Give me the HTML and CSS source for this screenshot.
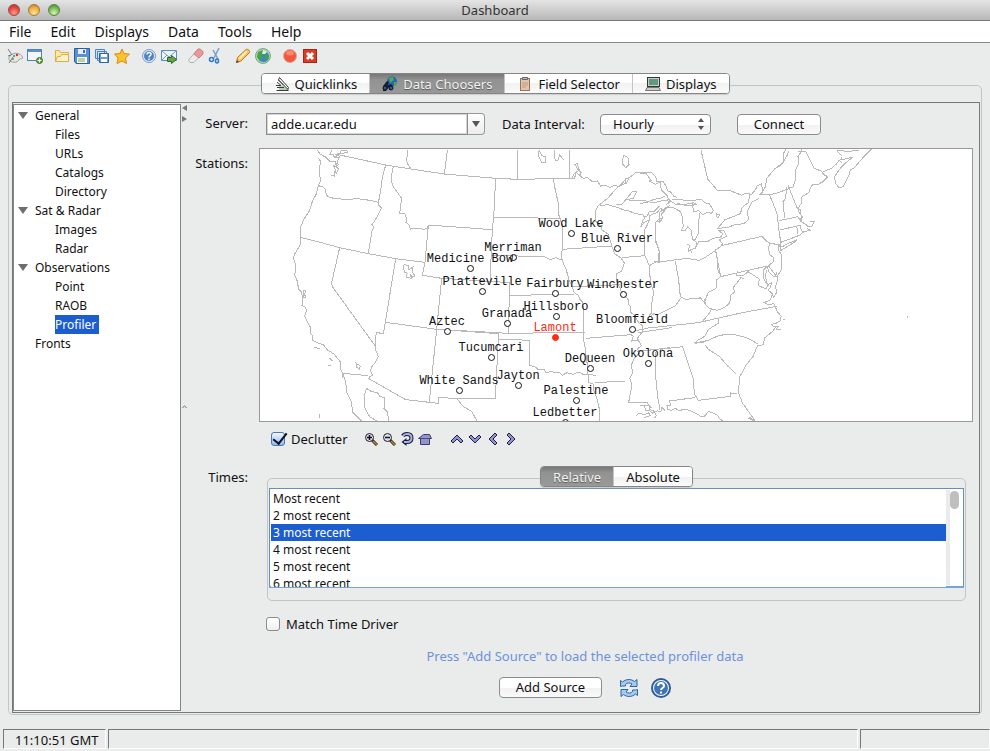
FILE: index.html
```html
<!DOCTYPE html>
<html lang="en">
<head>
<meta charset="utf-8">
<title>Dashboard</title>
<link rel="stylesheet" href="styles.css">
</head>
<body>
<header class="titlebar">
  <div class="lights"><span class="light red"></span><span class="light amber"></span><span class="light green"></span></div>
  <h1>Dashboard</h1>
</header>
<nav class="menubar">
  <button>File</button><button>Edit</button><button>Displays</button><button>Data</button><button>Tools</button><button>Help</button>
</nav>
<div class="toolbar" role="toolbar" aria-label="Main">
  <div class="tools">
    <button aria-label="Dashboard"><svg viewBox="0 0 16 16"><path d="M4 7c3-3 10-2 11.500 2 .5 3-2 1-3 2-1 2-3 4-7 3s-5-4-1.500-7z" fill="#e6e8e4" stroke="#9a9e98"/><path d="M1 1l4 6M4 7L1 8M2 15l4-6" fill="none" stroke="#777"/><circle cx="7" cy="8" r="1" fill="#4a75c4"/><circle cx="10" cy="7" r="1.200" fill="#d33"/><circle cx="6" cy="11" r="1" fill="#4a4"/></svg></button>
    <button aria-label="New window"><svg viewBox="0 0 16 16"><rect x=".5" y="1.500" width="14" height="11" fill="#f2f6fb" stroke="#5580b5"/><path d="M1 2h13v2H1z" fill="#5c8fd0"/><circle cx="12.500" cy="12.500" r="3" fill="#66a845" stroke="#39741f"/><path d="M10.500 12.500h4M12.500 10.500v4" stroke="#fff"/></svg></button>
  </div>
  <div class="tools">
    <button aria-label="Open"><svg viewBox="0 0 16 16"><path d="M1.500 13.500v-11h4l1 2h8v9z" fill="#fbe9a6" stroke="#e0ac48"/><path d="M3.500 8.500h3l1-2h7v7h-13z" fill="#fdf3c8" stroke="#e0ac48"/></svg></button>
    <button aria-label="Save"><svg viewBox="0 0 16 16"><path d="M.5.5h15v15H2l-1.500-2z" fill="#5b8fd3" stroke="#285e9e"/><path d="M4 1h8v5H4z" fill="#e7effa"/><path d="M9 2h2v3H9z" fill="#376fb2"/><path d="M3 9h10v6H3z" fill="#fff"/><path d="M4 11h7M4 13h7" stroke="#76a83f"/></svg></button>
    <button aria-label="Save as"><svg viewBox="0 0 16 16"><path d="M1.500 1.500h9v9h-9zM3.500 3.500h9v9h-9z" fill="#cfe0f4" stroke="#4e83c4"/><path d="M5.500 5.500h9v9h-9z" fill="#6c9cdb" stroke="#2c63a8"/><path d="M7 6h6v3H7zM7 11h6v3H7z" fill="#fff"/></svg></button>
    <button aria-label="Favorites"><svg viewBox="0 0 16 16"><path d="M8 1l2 4.500 5.500.5-4 4 1 5.500L8 13l-5 2.500L4 10 .5 6 6 5.500z" fill="#fbc22d" stroke="#d98d12"/></svg></button>
  </div>
  <div class="tools">
    <button aria-label="Help"><svg viewBox="0 0 16 16"><circle cx="8" cy="8" r="6.500" fill="#e4ecf6" stroke="#7d9cc6"/><circle cx="8" cy="8" r="5" fill="#4f83c6"/><path d="M6 6.500c0-3 4.500-2.500 4 0-.3 1.300-2 1.300-2 3M8 10.500v1.500" fill="none" stroke="#fff" stroke-width="1.500"/></svg></button>
    <button aria-label="Support request"><svg viewBox="0 0 16 16"><path d="M.5 2.500h15v10H.5z" fill="#edf4fc" stroke="#5e8cc3"/><path d="M1 3l7 6 7-6M1 12l5-5" fill="none" stroke="#6f9bd0"/><path d="M6.500 9.500h4v-2l5 4-5 4v-2h-4z" fill="#69a349" stroke="#2d6c20"/></svg></button>
  </div>
  <div class="tools">
    <button aria-label="Remove all"><svg viewBox="0 0 16 16"><path d="M.5 12l9-10.500 5.500 3.500-9 9.500H2z" fill="#ecebea" stroke="#b5b0b0"/><path d="M6 6l4-5h2l3 2.500V6l-4 4z" fill="#ee979b" stroke="#cf7f80"/></svg></button>
    <button aria-label="Remove displays"><svg viewBox="0 0 16 16"><path d="M11 0L6 10M5 2l5 9" fill="none" stroke="#7a9dca" stroke-width="1.500"/><ellipse cx="3.500" cy="11.500" rx="2" ry="2" fill="none" stroke="#2f76c4" stroke-width="1.500"/><ellipse cx="9" cy="13" rx="1.500" ry="2" fill="none" stroke="#2f76c4" stroke-width="1.500"/></svg></button>
  </div>
  <div class="tools">
    <button aria-label="Edit"><svg viewBox="0 0 16 16"><path d="M1.500 14.500l1-5 8.500-8c1-1 4.500 1 3.500 3L6 13z" fill="#fbc65c" stroke="#c8741c"/><path d="M4.500 10.500l7-7" stroke="#fff0bc" stroke-width="2"/><path d="M1 15l1-3 2 2z" fill="#444"/></svg></button>
    <button aria-label="Globe"><svg viewBox="0 0 16 16"><circle cx="8" cy="8" r="7.500" fill="#a9d6b0" stroke="#7aa88a"/><circle cx="8.500" cy="8.500" r="5.500" fill="#3c86c4"/><path d="M3 4l5-2 1 2-3 2 1 3-2 4-3-4zM10 6l4 1-1 5-3-2z" fill="#48a33c"/><path d="M8 2l4 2-2 2-3 0z" fill="#e0f4dc"/></svg></button>
  </div>
  <div class="tools">
    <button aria-label="Stop"><svg viewBox="0 0 16 16"><circle cx="8" cy="8" r="6.500" fill="#f4573f" stroke="#dca898"/><ellipse cx="8" cy="5" rx="4" ry="2.500" fill="#fa8872"/></svg></button>
    <button aria-label="Exit"><svg viewBox="0 0 16 16"><rect x="1.500" y="1.500" width="13" height="13" fill="#d93d27" stroke="#a82414"/><path d="M5 5l6 6M11 5l-6 6" stroke="#fff" stroke-width="3"/></svg></button>
  </div>
</div>

<main class="dash">
  <div class="tabs" role="tablist">
    <button role="tab"><svg viewBox="0 0 16 16"><path d="M5 9.500h4L15 14H5z" fill="#b8cdb4"/><path d="M2.500 14.500h12M3 11.500h7M2 9.500h5L3 6M4.500 4l5 5M5.500 1.500l9 10-1 3M5.500 1.500l-1 2.500 9 9" fill="none" stroke="#3a3a3a"/></svg>Quicklinks</button>
    <button role="tab" aria-selected="true"><svg viewBox="0 0 16 16"><circle cx="10" cy="5.500" r="5" fill="#2a62b8"/><path d="M7 2l4-1 1 3-4 3zM12 6l3 0-3 5z" fill="#46b04a"/><path d="M1 10l4-5 2 1-1 3 3-1 2 2-1 4H7v-3l-3 4H1z" fill="#16203a"/><circle cx="3" cy="12" r="2" fill="#3454a0" stroke="#111"/><circle cx="9" cy="12" r="2" fill="#3454a0" stroke="#111"/></svg>Data Choosers</button>
    <button role="tab"><svg viewBox="0 0 16 16"><rect x="3.500" y="2.500" width="9" height="12" fill="#e0c4ac" stroke="#9b735c"/><path d="M5.500 1.500h5v2h-5z" fill="#bbb" stroke="#666"/><path d="M5 7h6M5 9h6M5 11h4" stroke="#c29a85"/></svg>Field Selector</button>
    <button role="tab"><svg viewBox="0 0 16 16"><rect x="2.500" y="1.500" width="12" height="9" fill="#ccc" stroke="#333"/><path d="M4 3h9v6H4z" fill="#5d9a80"/><path d="M2 11.500h12l1.500 3H.5z" fill="#ccc" stroke="#777"/></svg>Displays</button>
  </div>
  <div class="frame">
    <div class="split">
      <nav class="tree" aria-label="Choosers">
        <ul>
          <li class="open"><a href="#">General</a>
            <ul><li><a href="#">Files</a></li><li><a href="#">URLs</a></li><li><a href="#">Catalogs</a></li><li><a href="#">Directory</a></li></ul></li>
          <li class="open"><a href="#">Sat &amp; Radar</a>
            <ul><li><a href="#">Images</a></li><li><a href="#">Radar</a></li></ul></li>
          <li class="open"><a href="#">Observations</a>
            <ul><li><a href="#">Point</a></li><li><a href="#">RAOB</a></li><li><a href="#" class="current">Profiler</a></li></ul></li>
          <li><a href="#">Fronts</a></li>
        </ul>
      </nav>
      <div class="divider">
        <svg viewBox="0 0 8 22"><path d="M6 1v6L1 4zM1 12v6l5-3z" fill="#777"/></svg>
        <svg class="grip" viewBox="0 0 8 22"><path d="M1.500 14q2-4 4 0" fill="none" stroke="#777"/></svg>
      </div>
      <form class="chooser" onsubmit="return false">
        <label class="name" for="server">Server:</label>
        <div class="row inset">
          <div class="combo"><input id="server" type="text" value="adde.ucar.edu"><button type="button" aria-label="Show servers"><svg viewBox="0 0 8 6"><path d="M0 0h8L4 6z" fill="#555"/></svg></button></div>
          <label class="interval" for="interval">Data Interval:</label>
          <div class="picker"><select id="interval"><option>Hourly</option><option>6-minute</option></select><svg viewBox="0 0 6 12"><path d="M0 4l3-4 3 4zM0 8l3 4 3-4z" fill="#555"/></svg></div>
          <button type="button" class="push connect">Connect</button>
        </div>

        <span class="name stations">Stations:</span>
        <div class="map">
          <svg viewBox="260 149 712 272" preserveAspectRatio="xMinYMin slice" role="img" aria-label="Profiler stations">
            <g class="borders" transform="translate(255 145) scale(.333333)">
              <path d="M187 15l8 12 18 10 12 12 14 2M190 40l8 10-4 15 0 28 4 10-8 19M240 27l38 8 114 25 76 12 100 15 154 13M392 60l-10 38-5 40-7 36M190 122l14 4 7 8 3 16 10 8 25 3 25 3 30-3 20 2 20 3 26 6M370 174l2 8 8 7-10 20-12 20-7 10 6 9-6 10-11 68M190 122l-6 25-12 22-8 28-16 23-10 23-2 34"/>
              <path d="M136 277l0 22-18 30-3 12 8 20-4 30 9 20 2 20 10 11 3 22-2 18 10 4 4 10-6 17 8 18 9 15 0 18 8 9-3 12 16 8 18 6 12 16 20 12 20 25-2 15 8 18-2 15M136 277l60 15 58 16 86 18 82 15 88 11M254 308l-24 105 2 12 128 177M422 341l-31 191-6 35-10 0-2-5-8 0-2 8-3 32 3 15 7 18-11 20-10 12-2 13 6 10-11 7M264 685l76 7M340 700l112 64 98 11 0-17 56 2 116 2M391 532l154 21 186 13M560 400l-15 153-22 217M510 352l-8 39 58 9 145 9M520 240l-10 112"/>
              <path d="M415 65l-6 30 3 26 12 17 16 22-6 46 16 0 4 12-1 14 8 6 6 15 8-4 8 3 12-2 10 4 12-5 3-10M520 240l192 14M722 100l-6 117-4 37-7 155M458 15l-3 34 5 12 8 11M577 15l-9 72M264 685l8 28 4 32 14 28 2 27 27 28M335 730l-7 18 2 42 14 25 22 13M335 730l14 10 18 2 7 12 15 5-2 32 10 10 4 26M605 760l20 25 25 14 16 29"/>
              <path d="M230 16l-5 12 10 0 4 10 14-2-6 12 3 12-7 4 7 8-6 12-4-5-2 14-10-2M235 36l16-5 8-14 14-2 6 6-16 4-16 2M240 48l4 10-8 4 6 14-4 12M448 358l12 4 2 12 12-8-2 16 8 10-7 4-8-8 4 12-16-4 4-12-8-2-4-16zM144 438l8-1-3 12 4 10-8 0zM178 607l18 4M224 640l8 8M220 662l7 1M303 655l13 8-3 9-8-6zM193 807l2 12"/>
            </g>
            <g class="borders" transform="translate(420 145) scale(.333333)">
              <path d="M226 100l68 3 106-2 50 0M221 217l200 3M292 15l0 86M450 15l0 86M400 101l6 35 8 34 2 38 7 22 5 14-1 69-4 20 4 14 12 28 8 30 12 26 4 12 12 8 4 12 8 8 4 24 1 97 3 15 8 60 2 45 14 5 1 15 11 30 9 38-1 28M212 332l158 2 20 10 18-6 17 7M427 313l75-5 73-5M268 451l195-3M212 409l56 4 0 38-3 114 230-3M50 553l215 12M235 567l0 15 94 4 0 75 18 6 8 8 18 0 4 8 18-4 8 5 16-1 8 8 14-8 18 5 18-7 14 8 16-2 20 5M235 582l-9 178"/>
              <path d="M455 425l145-6M497 580l136-11 7 5-5 14 20-1M525 713l90-5M575 303l10 24 18 12 10 15-8 24-16 8 0 22 5 8 12 28 19 20 0 12 8 12-1 14 10 8 15 24 10 8 0 18-15 20 12 22-12 10 6 12-14 14-10 22 4 24-9 16 7 20-10 52 56 2 12 15M535 182l-8 15-2 30 18 18 3 10 18 12 12 36M605 338l70-6M688 362l3 48 10 32-6 36 0 26-8 8M655 563l100-15M650 620l100-12M706 620l2 85 5 50 7 40"/>
              <path d="M450 101l14-2 4-18 10 10 6-8-10-10-9-14 7-4 6 20-16 12-6 14M480 92l10 8 12-3 14 12 16-1 10 15 14-3 14 8 12-7 15 3 18-8 2-15 10-2 20-16 48 0 12 12 4 16 18-2 10 16 3 12 10 4 10 14 10 2M535 182l28-22 22-25 20-18 12-14 10-5-6 12-4 8M540 182l22-3 30 8 20 8 15 3 20 8 23 4 4 12M588 180l18-2 30-37 14-1-10 20-18 4 20 4 30-2 28 8 30-8 20-2M670 222l-8 24 10-14 16-8 0-12 24-10 10-12 8 6 10-10 10-4M688 224l-8 20-8 14 1 28 2 46 13 30M688 362l22-12 8 0 1-28-12-32-2-50 4-12 10 4 0-30 15-10M610 30l14 8 3 20-10 10-10-12zM358 15l-4 16 10 20 14 2-2-18-10-3-8-14M405 15l-3 24 6 8 6-2 5-15 12 14M648 812l10-8 15 5 12-6 6 8-20 8M664 782l24 0 1 12 12 4 8 14-6 8"/>
            </g>
            <g class="borders" transform="translate(640 145) scale(.333333)">
              <path d="M183 15l20 87 28 33 40 2 34 14 14-7 16 4 12-15 5-11 12-6 5 24-12 10 32 0 28-8 42-16 9-25 0-30 8-16-2-20 12-18-3-6M330 148l-5 25-18 14-6 19-24 10-22 8-22 26 28-2 22-8 28-4 15-12-4-24 15-30 20-10M360 150l16-24 4-26 24-28 26-20 1-28 7-10M404 72l20-12 18-30 5-12M388 148l18 44 7 20 2 35 4 20 4 40-3 12M440 125l-3 35-8 10 5 50M444 120l15 38 12 30 10 6 0 12M418 227l56-12 8 14 2-20M420 255l60-14 4 15 6 8M470 243l4 23"/>
              <path d="M475 18l22 2 8 14 6 14 12 22 20 8 8 10 12 7-14 15-18 10-12-3-7 10-6 16-20 12-2 20-8 12 1 14 10 14-3 14 14 10 6 6 12-2 6-12-12 0M550 80l24-10 14-12 18-20M605 32l-14-14 12-3 14 5 40-4M605 52l-8-6 40-9-20 17-16 16-17 24 2 20 12 15 12-5 18-36 3-14 12-6 30-35 23-22M560 95l-8-6M500 250l10 6-20 4-10 10-30 12-28 10-5 12 8 2 14-8 32-14-8 8-40 24"/>
              <path d="M244 302l4-6-10-12 22-10-8-16-14 0 10 8-6 10-22 4-18 10-26 0-10 18-20 10 2-18-8-2M244 302l122-28 12 13 14 8 23 4 2 20 8 10-1 45-10 17M226 312l16 82M244 302l-18 15-30 20-18 9-36-6M242 395l140-32M390 295l-5 12 4 22 13 10-3 12-16 14 2 15 18 16 6-2-22-30M382 363l-12 12-1 22 9 18 8 4-8 12-24-9 4-20-12-8-22-14-14 12-22 0 5-13M242 395l-12 10-2 26-24 12-7 20-4 10-12-15-8 3-20-2-12 6-20-10-5-50-10-57M52 352l88-12M226 316l8 30-2 22 6 20M193 463l4 16 12 12 22 5 22-8 16-14 4-24 10-8-2-16 22-28 8 2"/>
              <path d="M408 380l6 20-7 25 3 18-10 15M380 375l-4 20 6 24 12-6-2 14-8 8 14 12-8 18-18 8 12 6 18-3 10 24 12 14-4 14-14 8-12 2 8 8 14-2-8 8 14 1M410 484l-98 18-76 17-61 14-150 16-22 5-20 3M215 490l-8 16-20 24-8 3M236 522l0 12-32 20-10 20-18 10-12 10 40-8 34-15 40-4 44 12 32 18M408 545l-10 14-24 20-4 20-18 4-12 30-22 28-12 22-8 14-2 48 12 30 38 54 M196 600l8 12 34 22 26 30 26 24M60 613l68-8M128 606l32 96 3 44 12 20 97-12 0-10 18 2M165 758l-78 10 6 14-12 0 1 10 12 4 12-6 14 8 10-6 22 5 20 10 12 8 10-2 12-14 25 10 8 12 24 17M164 595l35-5M122 460l-16 22-30 15-24 12-10-3-8 6M0 782l14 0 2 14 14 2 8 6 14-7 10 4 4-14 10 10"/>
              <path d="M58 183l-16 16-14 0-6 14-12 2M42 350l12-2 4-30-13-38 3-48 8-10 8-2-2 10 6-12-4-10 18-20 18 0 22 12 4 12 4 32-6 12 10 2 9-12 10 8 4 26 14 15-5 16-15 2 4 12M0 85l18 1 16 20-8 2 20 10 14-8 4 24 18 18 4 12 24 16 22-1 28-6 10 6-28 4-30-8M95 164l65 2 25-3 8 10 15 3 12 20-6 10-10-5-16 8-12-12-14 3-6-24 8 4M180 205l-3 18 0 40-14 24-8-4M230 207l8 2-2 8-8-2zM0 175l20-2 22-10 18-3 16-8M78 180l12-10-12-4M801 513l2 5M430 522l6 4M325 820l16 8-12-12"/>
            </g>
            <g class="sites">
              <circle cx="571.500" cy="233.500" r="3"/><text x="571" y="227">Wood Lake</text>
              <circle cx="617.500" cy="248.500" r="3"/><text x="617" y="242">Blue River</text>
              <circle cx="513.500" cy="257.500" r="3"/><text x="513" y="251">Merriman</text>
              <circle cx="470.500" cy="268.500" r="3"/><text x="470" y="262">Medicine Bow</text>
              <circle cx="482.500" cy="291.500" r="3"/><text x="482" y="285">Platteville</text>
              <circle cx="555.500" cy="293.500" r="3"/><text x="555" y="287">Fairbury</text>
              <circle cx="623.500" cy="294.500" r="3"/><text x="623" y="288">Winchester</text>
              <circle cx="556.500" cy="316.500" r="3"/><text x="556" y="310">Hillsboro</text>
              <circle cx="507.500" cy="323.500" r="3"/><text x="507" y="317">Granada</text>
              <circle cx="632.500" cy="329.500" r="3"/><text x="632" y="323">Bloomfield</text>
              <circle cx="447.500" cy="331.500" r="3"/><text x="447" y="325">Aztec</text>
              <g class="chosen"><circle cx="555.500" cy="337.500" r="3"/><text x="555" y="331">Lamont</text></g>
              <circle cx="491.500" cy="357.500" r="3"/><text x="491" y="351">Tucumcari</text>
              <circle cx="590.500" cy="368.500" r="3"/><text x="590" y="362">DeQueen</text>
              <circle cx="648.500" cy="363.500" r="3"/><text x="648" y="357">Okolona</text>
              <circle cx="518.500" cy="385.500" r="3"/><text x="518" y="379">Jayton</text>
              <circle cx="459.500" cy="390.500" r="3"/><text x="459" y="384">White Sands</text>
              <circle cx="576.500" cy="400.500" r="3"/><text x="576" y="394">Palestine</text>
              <circle cx="565.500" cy="422.500" r="3"/><text x="565" y="416">Ledbetter</text>
            </g>
          </svg>
        </div>

        <div class="row field mapbar">
          <label class="check"><input type="checkbox" checked>Declutter</label>
          <div class="mapicons">
            <button type="button" aria-label="Zoom in"><svg viewBox="0 0 14 14"><path d="M8 8l5 5" stroke="#222" stroke-width="3"/><path d="M9 9l4 4" stroke="#c9861c" stroke-width="1.500"/><circle cx="5.500" cy="5.500" r="4" fill="#dcdcf6" stroke="#222"/><path d="M3 5.500h5M5.500 3v5" stroke="#111" stroke-width="1.500"/></svg></button>
            <button type="button" aria-label="Zoom out"><svg viewBox="0 0 14 14"><path d="M8 8l5 5" stroke="#222" stroke-width="3"/><path d="M9 9l4 4" stroke="#c9861c" stroke-width="1.500"/><circle cx="5.500" cy="5.500" r="4" fill="#dcdcf6" stroke="#222"/><path d="M3 5.500h5" stroke="#111" stroke-width="1.500"/></svg></button>
            <button type="button" aria-label="Undo"><svg viewBox="0 0 14 14"><path d="M3 4q1-2 4-2 4.500 0 4.500 4T7 10H5" fill="none" stroke="#1c1c3c" stroke-width="4"/><path d="M6.500 6v8L1.500 10z" fill="#1c1c3c"/><path d="M3 4q1-2 4-2 4.500 0 4.500 4T7 10H4" fill="none" stroke="#b0b0e4" stroke-width="2"/></svg></button>
            <button type="button" aria-label="Home"><svg viewBox="0 0 14 14"><path d="M.5 6.500l5-4h6l2 4h-2v6h-9v-6z" fill="#9494cc" stroke="#3c3c6c"/><path d="M2 6.500h10" stroke="#4a4a80"/></svg></button>
          </div>
          <div class="mapicons moves">
            <button type="button" aria-label="Up"><svg viewBox="0 0 14 14"><path class="arrow" d="M7 3l6 6-2 2-4-4-4 4-2-2z"/></svg></button>
            <button type="button" aria-label="Down"><svg viewBox="0 0 14 14"><path class="arrow" d="M7 11l6-6-2-2-4 4-4-4-2 2z"/></svg></button>
            <button type="button" aria-label="Left"><svg viewBox="0 0 14 14"><path class="arrow" d="M3 7l6-6 2 2-4 4 4 4-2 2z"/></svg></button>
            <button type="button" aria-label="Right"><svg viewBox="0 0 14 14"><path class="arrow" d="M11 7L5 1 3 3l4 4-4 4 2 2z"/></svg></button>
          </div>
        </div>

        <label class="name times-name" for="times">Times:</label>
        <div class="times">
          <div class="tabs" role="tablist"><button type="button" role="tab" aria-selected="true">Relative</button><button type="button" role="tab">Absolute</button></div>
          <div class="group">
            <div class="listbox">
              <select id="times" size="6">
                <option>Most recent</option><option>2 most recent</option><option selected>3 most recent</option><option>4 most recent</option><option>5 most recent</option><option>6 most recent</option><option>7 most recent</option><option>8 most recent</option><option>9 most recent</option><option>10 most recent</option><option>11 most recent</option><option>12 most recent</option><option>13 most recent</option><option>14 most recent</option><option>15 most recent</option><option>16 most recent</option><option>17 most recent</option><option>18 most recent</option><option>19 most recent</option><option>20 most recent</option><option>21 most recent</option><option>22 most recent</option><option>23 most recent</option><option>24 most recent</option><option>25 most recent</option><option>26 most recent</option><option>27 most recent</option><option>28 most recent</option><option>29 most recent</option><option>30 most recent</option>
              </select>
              <div class="scroll"><span></span></div>
            </div>
          </div>
        </div>

        <div class="field match"><label class="check"><input type="checkbox">Match Time Driver</label></div>
        <p class="hint">Press "Add Source" to load the selected profiler data</p>
        <div class="actions">
          <button type="button" class="push add">Add Source</button>
          <button type="button" class="round" aria-label="Refresh"><svg viewBox="0 0 20 20"><path d="M1.500 8.500V2.500l2 1.500c4-3.500 9-3 12-.5l2.500-2v7h-7l2-2.500c-2-1.500-5-1.500-6.500.5v1.500h-3z" fill="#a9c9ec" stroke="#2c66aa"/><path d="M18.500 11.500v6l-2-1.500c-4 3.500-9 3-12 .5l-2.500 2v-7h7l-2 2.500c2 1.500 5 1.500 6.500-.5v-1.500h3z" fill="#a9c9ec" stroke="#2c66aa"/></svg></button>
          <button type="button" class="round" aria-label="Help"><svg viewBox="0 0 20 20"><circle cx="10" cy="10" r="9" fill="#fff" stroke="#2f5b96" stroke-width="2"/><circle cx="10" cy="10" r="7" fill="#3e74b8"/><path d="M7 8c0-4 6-4 6 0 0 2-3 2-3 4M10 13.500v2" fill="none" stroke="#fff" stroke-width="2"/></svg></button>
        </div>
      </form>
    </div>
  </div>
</main>
<footer class="status"><div class="clock">11:10:51 GMT</div><div class="message"></div><div class="memory"></div></footer>
</body>
</html>
```

FILE: styles.css
```css
* { box-sizing: border-box; }
body {
  margin: 0;
  min-height: 100vh;
  display: flex;
  flex-direction: column;
  background: #eaeceb;
  color: #111;
  font: 13px/20px "Noto Sans", "Open Sans", sans-serif;
}
button, input, select { font: inherit; color: inherit; margin: 0; }
button { border: 0; padding: 0; background: none; }
svg { display: block; }
a { color: inherit; text-decoration: none; }

.titlebar {
  display: grid;
  grid-template-columns: 1fr auto 1fr;
  align-items: center;
  height: 21px;
  background: linear-gradient(#e4e4e4, #b8b8b8);
  border-bottom: 1px solid #777;
}
.titlebar h1 { grid-column: 2; margin: 0; font-size: 13px; font-weight: 400; color: #333; }
.lights { display: flex; gap: 8px; padding-left: 8px; }
.light { width: 12px; height: 12px; border-radius: 50%; border: 1px solid #777; }
.red { background: radial-gradient(circle at 50% 80%, #ff9a8c, #e0443a 60%, #a33); border-color: #a04840; }
.amber { background: radial-gradient(circle at 50% 80%, #ffe79a, #eda93c 60%, #b67420); border-color: #a77a3c; }
.green { background: radial-gradient(circle at 50% 80%, #d4f7b0, #74b552 60%, #47832e); border-color: #5a8048; }

.menubar {
  display: flex;
  gap: 19px;
  height: 22px;
  padding-left: 9px;
  background: #fff;
  border-bottom: 1px solid #888;
  font-size: 14px;
}
.toolbar { display: flex; align-items: flex-start; gap: 11px; padding: 5px 7px 0; height: 30px; }
.tools { display: flex; gap: 4px; }
.tools svg { width: 16px; height: 16px; }

.dash { flex: 1; display: flex; flex-direction: column; padding: 0 8px; }
.tabs { display: flex; align-self: center; position: relative; z-index: 1; border: 1px solid #858585; border-radius: 4px; overflow: hidden; box-shadow: 0 1px 1px #ccc; }
.tabs button {
  display: flex;
  align-items: center;
  gap: 5px;
  height: 19px;
  padding: 0 12px;
  background: linear-gradient(#fff 50%, #f0f1f0 50%, #fbfbfb);
}
.tabs button + button { border-left: 1px solid #c4c4c4; }
.tabs [aria-selected] { background: linear-gradient(#777, #929292 30%, #999); color: #f2f2f2; text-shadow: 0 1px 1px #555; }
.tabs svg { width: 16px; height: 16px; }
.frame {
  flex: 1;
  display: flex;
  margin-top: -9px;
  padding: 16px 1px 1px 3px;
  border: 1px solid #c3c5c4;
  border-radius: 5px;
}
.split { flex: 1; display: flex; border: 1px solid #777; padding: 1px 0 1px; }
.tree { width: 168px; padding: 1px 0; background: #fff; border: 1px solid #858585; font-size: 12px; line-height: 19px; }
.tree ul { list-style: none; margin: 0; padding: 0 0 0 21px; }
.tree ul ul { padding-left: 20px; }
.tree .open { position: relative; }
.tree .open::before { content: ""; position: absolute; left: -17px; top: 6px; border: 5px solid transparent; border-top: 7px solid #6e6e6e; border-bottom: 0; }
.tree .current { display: inline-block; padding-right: 3px; background: #1c5dcf; color: #fff; }
.divider { display: flex; flex-direction: column; width: 8px; }
.divider svg { width: 8px; height: 22px; }
.divider .grip { margin-top: 268px; }

.chooser {
  flex: 1;
  min-width: 0;
  display: grid;
  grid-template-columns: 59px minmax(0, 1fr);
  column-gap: 11px;
  align-content: start;
  padding: 9px 6px 0 0;
}
.name { text-align: right; white-space: nowrap; }
.row { display: flex; align-items: center; }
.inset { padding-left: 7px; height: 22px; }
.combo { display: flex; width: 219px; height: 22px; }
.combo input { flex: 1; min-width: 0; padding: 0 4px; background: #fff; border: 1px solid #8c8c8c; box-shadow: inset 0 0 0 1px #d5d5d5; outline: 0; }
.combo button { width: 17px; border: 1px solid #999; border-left: 0; border-radius: 0 4px 4px 0; background: linear-gradient(#fff, #ececec); }
.combo button svg { width: 8px; height: 6px; margin: auto; }
.interval { width: 98px; margin-left: 17px; white-space: nowrap; }
.picker { display: flex; align-items: center; width: 111px; height: 21px; border: 1px solid #8c8c8c; border-radius: 4px; background: linear-gradient(#fff 50%, #f1f1f1 50%, #fafafa); }
.picker select { flex: 1; appearance: none; border: 0; background: none; padding: 0 12px; }
.picker > svg { width: 6px; height: 12px; margin-right: 6px; }
.push { height: 21px; border: 1px solid #8c8c8c; border-radius: 4px; background: linear-gradient(#fff 50%, #f1f1f1 50%, #fafafa); line-height: 19px; }
.connect { width: 84px; margin-left: 26px; }
.stations { margin-top: 18px; }
.map { margin-top: 13px; height: 274px; background: #fff; border: 1px solid #999; overflow: hidden; }
.map svg { width: 100%; height: 272px; }
.borders path { fill: none; stroke: #b9b9b9; stroke-width: 1; vector-effect: non-scaling-stroke; shape-rendering: crispEdges; }
.sites { font: 12px "Liberation Mono", monospace; text-anchor: middle; fill: #111; }
.sites circle { fill: #fff; stroke: #111; }
.sites .chosen { fill: #ff2a12; }
.sites .chosen circle { fill: #ff2a12; stroke: #ff2a12; }

.field { grid-column: 2; padding-left: 7px; }
.mapbar { height: 20px; margin-top: 7px; padding-left: 12px; }
.check { display: flex; align-items: center; gap: 6px; }
.check input {
  appearance: none;
  width: 14px;
  height: 14px;
  border: 1px solid #8c8c8c;
  border-radius: 3px;
  background: linear-gradient(#fff, #f0f0f0);
}
.check input:checked { position: relative; border-color: #5377ad; background: linear-gradient(#f0f7ff, #8db9ef); }
.check input:checked::after { content: ""; position: absolute; left: 4px; top: -3px; width: 6px; height: 12px; border: solid #0c1020; border-width: 0 2px 2px 0; transform: rotate(38deg); }
.mapicons { display: flex; gap: 4px; margin-left: 16px; }
.moves { margin-left: 18px; }
.mapicons svg { width: 14px; height: 14px; }
.arrow { fill: #9090d4; stroke: #20203c; }

.times-name { margin-top: 18px; }
.times { display: flex; flex-direction: column; margin-top: 17px; padding: 0 7px 0 8px; }
.group { margin-top: -9px; padding: 9px 1px 12px; border: 1px solid #c3c5c4; border-radius: 5px; }
.listbox { display: flex; height: 100px; padding: 1px; border: 1px solid #6690b8; border-bottom: 2px solid #70a6dc; background: #fff; }
.listbox select {
  flex: 1;
  min-width: 0;
  height: 97px;
  padding: 0;
  border: 0;
  border-radius: 0;
  background: #fff;
  font-size: 12px;
  outline: 0;
  scrollbar-width: none;
}
.listbox option { height: 17px; min-height: 17px; padding: 0 2px; line-height: 17px; color: #111; }
.listbox option:checked { background: #1c5dcf linear-gradient(#1c5dcf, #1c5dcf); color: #fff; }
.scroll { width: 16px; padding: 1px 3px 0 0; border-left: 4px solid #eaeceb; }
.scroll span { display: block; height: 18px; border-radius: 5px; background: #bfbfbf; }
.match { margin-top: 13px; }
.hint { grid-column: 1 / -1; margin: 12px 0 0; padding-left: 8px; text-align: center; color: #6c91de; }
.actions { grid-column: 1 / -1; display: flex; align-items: center; justify-content: center; gap: 12px; margin-top: 11px; padding-left: 8px; }
.add { width: 103px; margin-right: 5px; }
.round svg { width: 20px; height: 20px; }

.status { display: flex; gap: 2px; margin-top: 14px; padding: 0 0 2px 3px; height: 22px; }
.status div { border: 1px solid #777; border-right-color: #fff; border-bottom-color: #fff; white-space: nowrap; }
.clock { width: 103px; padding-left: 11px; line-height: 20px; }
.message { flex: 1; }
.memory { width: 130px; }
```
